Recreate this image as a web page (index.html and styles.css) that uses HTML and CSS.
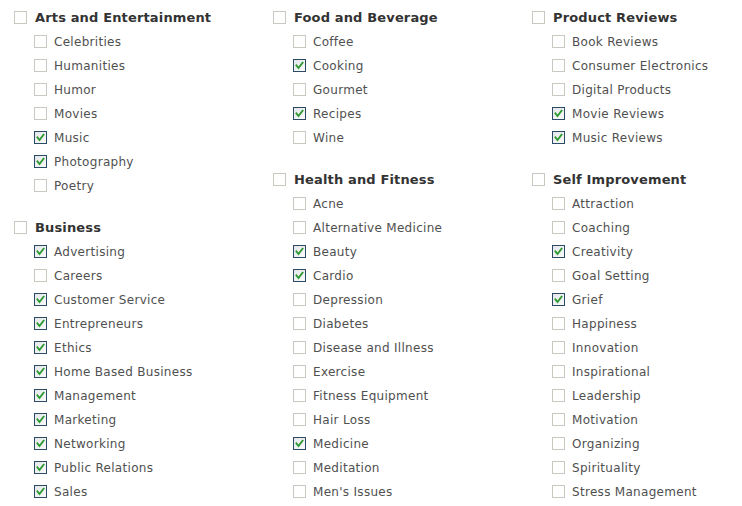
FILE: index.html
```html
<!DOCTYPE html>
<html>
<head>
<meta charset="utf-8">
<link rel="stylesheet" href="styles.css">
</head>
<body>
<div class="page">
  <div class="col">
    <div class="group">
      <div class="row head"><span class="cb"></span><span class="t">Arts and Entertainment</span></div>
      <div class="row item"><span class="cb"></span><span class="t">Celebrities</span></div>
      <div class="row item"><span class="cb"></span><span class="t">Humanities</span></div>
      <div class="row item"><span class="cb"></span><span class="t">Humor</span></div>
      <div class="row item"><span class="cb"></span><span class="t">Movies</span></div>
      <div class="row item"><span class="cb on"><svg viewBox="0 0 11 11"><path d="M2.5 5.5 L4.5 8 L8.5 2.8" /></svg></span><span class="t">Music</span></div>
      <div class="row item"><span class="cb on"><svg viewBox="0 0 11 11"><path d="M2.5 5.5 L4.5 8 L8.5 2.8" /></svg></span><span class="t">Photography</span></div>
      <div class="row item"><span class="cb"></span><span class="t">Poetry</span></div>
    </div>
    <div class="group">
      <div class="row head"><span class="cb"></span><span class="t">Business</span></div>
      <div class="row item"><span class="cb on"><svg viewBox="0 0 11 11"><path d="M2.5 5.5 L4.5 8 L8.5 2.8" /></svg></span><span class="t">Advertising</span></div>
      <div class="row item"><span class="cb"></span><span class="t">Careers</span></div>
      <div class="row item"><span class="cb on"><svg viewBox="0 0 11 11"><path d="M2.5 5.5 L4.5 8 L8.5 2.8" /></svg></span><span class="t">Customer Service</span></div>
      <div class="row item"><span class="cb on"><svg viewBox="0 0 11 11"><path d="M2.5 5.5 L4.5 8 L8.5 2.8" /></svg></span><span class="t">Entrepreneurs</span></div>
      <div class="row item"><span class="cb on"><svg viewBox="0 0 11 11"><path d="M2.5 5.5 L4.5 8 L8.5 2.8" /></svg></span><span class="t">Ethics</span></div>
      <div class="row item"><span class="cb on"><svg viewBox="0 0 11 11"><path d="M2.5 5.5 L4.5 8 L8.5 2.8" /></svg></span><span class="t">Home Based Business</span></div>
      <div class="row item"><span class="cb on"><svg viewBox="0 0 11 11"><path d="M2.5 5.5 L4.5 8 L8.5 2.8" /></svg></span><span class="t">Management</span></div>
      <div class="row item"><span class="cb on"><svg viewBox="0 0 11 11"><path d="M2.5 5.5 L4.5 8 L8.5 2.8" /></svg></span><span class="t">Marketing</span></div>
      <div class="row item"><span class="cb on"><svg viewBox="0 0 11 11"><path d="M2.5 5.5 L4.5 8 L8.5 2.8" /></svg></span><span class="t">Networking</span></div>
      <div class="row item"><span class="cb on"><svg viewBox="0 0 11 11"><path d="M2.5 5.5 L4.5 8 L8.5 2.8" /></svg></span><span class="t">Public Relations</span></div>
      <div class="row item"><span class="cb on"><svg viewBox="0 0 11 11"><path d="M2.5 5.5 L4.5 8 L8.5 2.8" /></svg></span><span class="t">Sales</span></div>
    </div>
  </div>
  <div class="col">
    <div class="group">
      <div class="row head"><span class="cb"></span><span class="t">Food and Beverage</span></div>
      <div class="row item"><span class="cb"></span><span class="t">Coffee</span></div>
      <div class="row item"><span class="cb on"><svg viewBox="0 0 11 11"><path d="M2.5 5.5 L4.5 8 L8.5 2.8" /></svg></span><span class="t">Cooking</span></div>
      <div class="row item"><span class="cb"></span><span class="t">Gourmet</span></div>
      <div class="row item"><span class="cb on"><svg viewBox="0 0 11 11"><path d="M2.5 5.5 L4.5 8 L8.5 2.8" /></svg></span><span class="t">Recipes</span></div>
      <div class="row item"><span class="cb"></span><span class="t">Wine</span></div>
    </div>
    <div class="group">
      <div class="row head"><span class="cb"></span><span class="t">Health and Fitness</span></div>
      <div class="row item"><span class="cb"></span><span class="t">Acne</span></div>
      <div class="row item"><span class="cb"></span><span class="t">Alternative Medicine</span></div>
      <div class="row item"><span class="cb on"><svg viewBox="0 0 11 11"><path d="M2.5 5.5 L4.5 8 L8.5 2.8" /></svg></span><span class="t">Beauty</span></div>
      <div class="row item"><span class="cb on"><svg viewBox="0 0 11 11"><path d="M2.5 5.5 L4.5 8 L8.5 2.8" /></svg></span><span class="t">Cardio</span></div>
      <div class="row item"><span class="cb"></span><span class="t">Depression</span></div>
      <div class="row item"><span class="cb"></span><span class="t">Diabetes</span></div>
      <div class="row item"><span class="cb"></span><span class="t">Disease and Illness</span></div>
      <div class="row item"><span class="cb"></span><span class="t">Exercise</span></div>
      <div class="row item"><span class="cb"></span><span class="t">Fitness Equipment</span></div>
      <div class="row item"><span class="cb"></span><span class="t">Hair Loss</span></div>
      <div class="row item"><span class="cb on"><svg viewBox="0 0 11 11"><path d="M2.5 5.5 L4.5 8 L8.5 2.8" /></svg></span><span class="t">Medicine</span></div>
      <div class="row item"><span class="cb"></span><span class="t">Meditation</span></div>
      <div class="row item"><span class="cb"></span><span class="t">Men's Issues</span></div>
    </div>
  </div>
  <div class="col">
    <div class="group">
      <div class="row head"><span class="cb"></span><span class="t">Product Reviews</span></div>
      <div class="row item"><span class="cb"></span><span class="t">Book Reviews</span></div>
      <div class="row item"><span class="cb"></span><span class="t">Consumer Electronics</span></div>
      <div class="row item"><span class="cb"></span><span class="t">Digital Products</span></div>
      <div class="row item"><span class="cb on"><svg viewBox="0 0 11 11"><path d="M2.5 5.5 L4.5 8 L8.5 2.8" /></svg></span><span class="t">Movie Reviews</span></div>
      <div class="row item"><span class="cb on"><svg viewBox="0 0 11 11"><path d="M2.5 5.5 L4.5 8 L8.5 2.8" /></svg></span><span class="t">Music Reviews</span></div>
    </div>
    <div class="group">
      <div class="row head"><span class="cb"></span><span class="t">Self Improvement</span></div>
      <div class="row item"><span class="cb"></span><span class="t">Attraction</span></div>
      <div class="row item"><span class="cb"></span><span class="t">Coaching</span></div>
      <div class="row item"><span class="cb on"><svg viewBox="0 0 11 11"><path d="M2.5 5.5 L4.5 8 L8.5 2.8" /></svg></span><span class="t">Creativity</span></div>
      <div class="row item"><span class="cb"></span><span class="t">Goal Setting</span></div>
      <div class="row item"><span class="cb on"><svg viewBox="0 0 11 11"><path d="M2.5 5.5 L4.5 8 L8.5 2.8" /></svg></span><span class="t">Grief</span></div>
      <div class="row item"><span class="cb"></span><span class="t">Happiness</span></div>
      <div class="row item"><span class="cb"></span><span class="t">Innovation</span></div>
      <div class="row item"><span class="cb"></span><span class="t">Inspirational</span></div>
      <div class="row item"><span class="cb"></span><span class="t">Leadership</span></div>
      <div class="row item"><span class="cb"></span><span class="t">Motivation</span></div>
      <div class="row item"><span class="cb"></span><span class="t">Organizing</span></div>
      <div class="row item"><span class="cb"></span><span class="t">Spirituality</span></div>
      <div class="row item"><span class="cb"></span><span class="t">Stress Management</span></div>
    </div>
  </div>
</div>
</body>
</html>
```

FILE: styles.css
```css
html, body {
  margin: 0;
  padding: 0;
  background: #ffffff;
}
.page {
  display: grid;
  grid-template-columns: 259px 259px 210px;
  padding: 5px 0 0 14px;
  font-family: "DejaVu Sans", Verdana, sans-serif;
  color: #505050;
}
.col {
  display: flex;
  flex-direction: column;
  gap: 18px;
}
.row {
  display: flex;
  align-items: center;
  height: 24px;
  white-space: nowrap;
}
.item .t {
  padding-top: 2px;
}
.head .t {
  padding-top: 1px;
}
.head {
  font-weight: bold;
  font-size: 13px;
  letter-spacing: 0.15px;
  color: #333333;
  gap: 8px;
}
.item {
  padding-left: 20px;
  font-size: 12px;
  letter-spacing: 0.3px;
  gap: 7px;
}
.cb {
  box-sizing: border-box;
  width: 13px;
  height: 13px;
  flex: none;
  border: 1px solid #c9c9c1;
  background: #ffffff;
  display: flex;
  align-items: center;
  justify-content: center;
}
.cb.on {
  border-color: #2a4a66;
  background: linear-gradient(135deg, #e4e6e8, #fbfbfb);
}
.cb svg {
  width: 11px;
  height: 11px;
  display: block;
}
.cb svg path {
  fill: none;
  stroke: #2f9a32;
  stroke-width: 2;
  stroke-linecap: square;
}
```
